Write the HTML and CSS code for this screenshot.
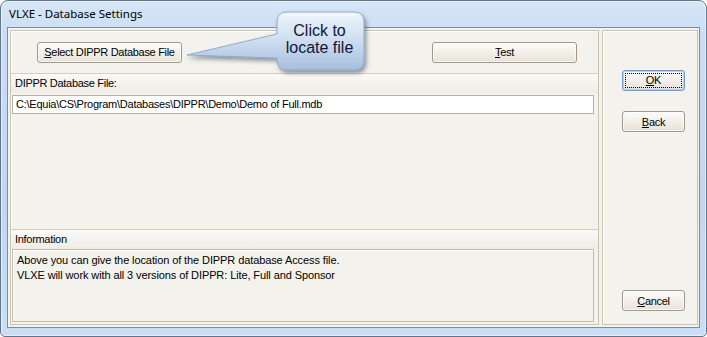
FILE: index.html
```html
<!DOCTYPE html>
<html lang="en">
<head>
    <meta charset="UTF-8">
    <title>VLXE - Database Settings</title>
    <link rel="stylesheet" href="styles.css">
</head>
<body>
    <div class="window">
        <div class="titlebar">VLXE - Database Settings</div>
        <div class="client">
            <div class="main-panel">
                <div class="actions">
                    <button class="btn btn-wide"><u>S</u>elect DIPPR Database File</button>
                    <button class="btn btn-wide"><u>T</u>est</button>
                </div>
                <div class="band">DIPPR Database File:</div>
                <div class="path-field">C:\Equia\CS\Program\Databases\DIPPR\Demo\Demo of Full.mdb</div>
                <div class="spacer"></div>
                <div class="band">Information</div>
                <div class="info-box">
                    Above you can give the location of the DIPPR database Access file.<br>
                    VLXE will work with all 3 versions of DIPPR: Lite, Full and Sponsor
                </div>
            </div>
            <div class="side-panel">
                <button class="btn btn-small btn-default"><span class="focus-ring"><u>O</u>K</span></button>
                <button class="btn btn-small btn-back"><u>B</u>ack</button>
                <div class="spacer"></div>
                <button class="btn btn-small"><u>C</u>ancel</button>
            </div>
        </div>
    </div>

    <!-- callout bubble over the dialog -->
    <svg class="callout-shape" width="200" height="78" viewBox="0 0 200 78">
        <defs>
            <linearGradient id="bubbleFill" x1="0" y1="0" x2="0" y2="1">
                <stop offset="0" stop-color="#eef4fb"/>
                <stop offset="0.45" stop-color="#d1e0f1"/>
                <stop offset="1" stop-color="#a6bedd"/>
            </linearGradient>
            <filter id="bubbleShadow" x="-20%" y="-20%" width="150%" height="160%">
                <feDropShadow dx="2" dy="3" stdDeviation="2.2" flood-color="#3d4a5c" flood-opacity="0.55"/>
            </filter>
        </defs>
        <path d="M107,7 H174 Q184,7 184,17 V55 Q184,65 174,65 H107 Q97,65 97,55 V53 L7,50 L97,29 V17 Q97,7 107,7 Z"
              fill="url(#bubbleFill)" stroke="#93abcc" stroke-width="1" filter="url(#bubbleShadow)"/>
        <path d="M106,10 H175" stroke="#ffffff" stroke-width="1.5" opacity="0.9"/>
    </svg>
    <div class="callout-text">Click to<br>locate file</div>
</body>
</html>
```

FILE: styles.css
```css
* {
    margin: 0;
    padding: 0;
    box-sizing: border-box;
}

body {
    position: relative;
    width: 707px;
    height: 337px;
    background: #ffffff;
    font-family: 'Liberation Sans', Arial, sans-serif;
    font-size: 11px;
    color: #000000;
    overflow: hidden;
}

.window {
    width: 707px;
    height: 337px;
    display: flex;
    flex-direction: column;
    padding: 0 6px 8px 6px;
    border: 1px solid #62758d;
    border-radius: 8px 8px 5px 5px;
    background: linear-gradient(180deg, #d6e6f7 0%, #c9dcf2 12%, #c2d7ef 60%, #cadef3 100%);
    box-shadow: inset 0 0 0 1px rgba(255, 255, 255, 0.55);
}

.titlebar {
    height: 26px;
    line-height: 26px;
    padding-left: 2px;
    font-family: 'Noto Sans', 'Open Sans', sans-serif;
    font-size: 11.5px;
    color: #000000;
}

.client {
    flex: 1;
    display: flex;
    gap: 3px;
    padding: 2px 1px 2px 2px;
    background: #f4f2ec;
    border: 1px solid #7c8ca2;
}

.main-panel {
    width: 589px;
    display: flex;
    flex-direction: column;
    border: 1px solid #cbc3b3;
    box-shadow: inset 1px 1px 0 #ffffff;
}

.side-panel {
    flex: 1;
    display: flex;
    flex-direction: column;
    align-items: flex-start;
    padding: 39px 0 13px 19px;
    border: 1px solid #cbc3b3;
    box-shadow: inset 1px 1px 0 #ffffff;
}

.actions {
    height: 42px;
    display: flex;
    align-items: center;
    justify-content: space-between;
    padding: 0 21px 0 26px;
}

.band {
    height: 20px;
    line-height: 19px;
    padding-left: 4px;
    border-top: 1px solid #d6cfc0;
    background: linear-gradient(180deg, #fbfaf7, #efece5);
    letter-spacing: -0.3px;
}

.path-field {
    height: 19px;
    line-height: 17px;
    margin: 2px 4px 0 1px;
    padding-left: 3px;
    background: #ffffff;
    border: 1px solid #b4b1aa;
    letter-spacing: -0.25px;
    white-space: nowrap;
}

.spacer {
    flex: 1;
}

.info-box {
    height: 73px;
    margin: 0 4px 2px 1px;
    padding: 3px 4px;
    line-height: 15px;
    border: 1px solid #c4bba9;
    box-shadow: inset 1px 1px 0 #ffffff;
    letter-spacing: -0.1px;
}

.btn {
    height: 21px;
    font-family: 'Liberation Sans', Arial, sans-serif;
    font-size: 11px;
    color: #000000;
    letter-spacing: -0.3px;
    border: 1px solid #a2988a;
    border-radius: 3px;
    background: linear-gradient(180deg, #fdfcfa 0%, #f3f0ea 50%, #e7e2d8 100%);
    box-shadow: inset 0 0 0 1px rgba(255, 255, 255, 0.7);
}

.btn-wide {
    width: 145px;
}

.btn-small {
    width: 63px;
}

.btn-default {
    border-color: #6f9ad6;
    box-shadow: inset 0 0 0 1px #b9d1ef;
    padding: 2px;
}

.focus-ring {
    display: block;
    height: 100%;
    line-height: 13px;
    border: 1px dotted #000000;
}

.btn-back {
    margin-top: 20px;
}

.callout-shape {
    position: absolute;
    left: 180px;
    top: 5px;
}

.callout-text {
    position: absolute;
    left: 276px;
    top: 22px;
    width: 87px;
    text-align: center;
    font-family: 'Liberation Sans', Arial, sans-serif;
    font-size: 16px;
    line-height: 17px;
    color: #0d1640;
}
```
